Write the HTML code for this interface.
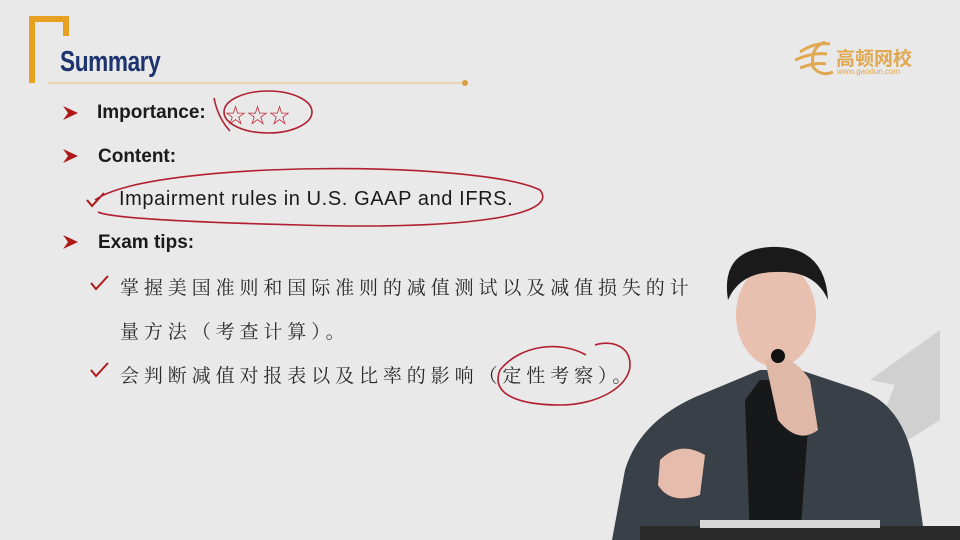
<!DOCTYPE html>
<html><head><meta charset="utf-8"><style>
body{margin:0;width:960px;height:540px;overflow:hidden;background:#e9e9e9;position:relative;font-family:"Liberation Sans","Noto Sans CJK SC",sans-serif}
.a{position:absolute}
.t{font-size:19px;color:#1a1a1a}
.cn{font-family:"Noto Serif CJK SC","Noto Sans CJK SC",serif;font-size:19px;color:#2a2a2a;letter-spacing:4.9px}
</style></head><body>
<svg class="a" style="left:0;top:0" width="960" height="540">
<path d="M32 83 V19 H66 V36" fill="none" stroke="#e8a020" stroke-width="6"/>
<line x1="48" y1="83" x2="465" y2="83" stroke="#e8cfa0" stroke-width="1.5"/>
<circle cx="465" cy="83" r="3" fill="#d9a040"/>
<g fill="#b01818"><path d="M63 106 L78 113 L63 120 L68 113Z"/><path d="M63 149 L78 156 L63 163 L68 156Z"/><path d="M63 235 L78 242 L63 249 L68 242Z"/></g>
<g fill="none" stroke="#b01818" stroke-width="2"><path d="M87 200 l5 6 l12 -13"/><path d="M91 283 l5 6 l12 -13"/><path d="M91 370 l5 6 l12 -13"/></g>
<g fill="none" stroke="#b02030" stroke-width="1.6">
<ellipse cx="268" cy="112" rx="44" ry="21"/><path d="M214 98 q4 20 16 33"/>
<path d="M95 200 C150 160,480 160,540 190 C560 215,470 230,300 225 C180 222,110 218,98 212"/>
<path d="M586 355 C560 340,520 345,500 370 C490 395,520 405,560 405 C600 405,630 385,630 365 C630 345,610 340,595 345"/>
</g>
<path d="M940 330 L870 380 L895 385 L860 470 L940 420Z" fill="#d0d0d0"/>
<g fill="none" stroke="#e0a850" stroke-width="3"><path d="M800 52 q15 -10 30 -8 M795 60 q18 -8 32 -6 M800 68 q15 -6 26 -4"/><path d="M825 42 q-15 5 -12 25 q8 10 20 5"/></g>
<path d="M612 540 L625 470 Q640 420 700 395 L760 370 L800 370 L860 390 Q905 405 915 470 L925 540Z" fill="#3a4048"/>
<path d="M745 400 L760 380 L800 380 L810 400 L800 540 L750 540Z" fill="#17181a"/>
<ellipse cx="776" cy="315" rx="40" ry="52" fill="#e8c0b0"/>
<path d="M728 300 Q720 250 770 247 Q825 245 828 300 Q815 270 776 272 Q740 272 728 300Z" fill="#1a1a1a"/>
<path d="M765 360 q25 -10 45 20 l8 50 q-20 15 -40 -10Z" fill="#e0b8a8"/>
<path d="M660 460 q20 -20 45 -5 l-5 40 q-30 10 -42 -10Z" fill="#e6bcac"/>
<circle cx="778" cy="356" r="7" fill="#111"/>
<rect x="640" y="526" width="320" height="14" fill="#2a2a2a"/>
<rect x="700" y="520" width="180" height="8" fill="#d8d8d8"/>
</svg>
<div class="a" style="left:60px;top:46px;font-size:29px;font-weight:bold;color:#1d3470;transform:scaleX(0.78);transform-origin:left;letter-spacing:-0.5px">Summary</div>
<div class="a t" style="left:97px;top:102px;font-weight:bold">Importance:</div>
<div class="a" style="left:225px;top:100px;font-size:21px;color:#c02030;letter-spacing:1px">☆☆☆</div>
<div class="a t" style="left:98px;top:146px;font-weight:bold">Content:</div>
<div class="a t" style="left:119px;top:188px;font-size:20px;letter-spacing:0.6px">Impairment rules in U.S. GAAP and IFRS.</div>
<div class="a t" style="left:98px;top:232px;font-weight:bold">Exam tips:</div>
<div class="a cn" style="left:120px;top:273px">掌握美国准则和国际准则的减值测试以及减值损失的计</div>
<div class="a cn" style="left:120px;top:317px">量方法（考查计算）。</div>
<div class="a cn" style="left:120px;top:361px">会判断减值对报表以及比率的影响（定性考察）。</div>
<div class="a" style="left:836px;top:44px;font-size:19px;color:#e0a850;font-weight:bold">高顿网校</div>
<div class="a" style="left:837px;top:67px;font-size:8px;color:#e0a850">www.gaodun.com</div>
</body></html>
